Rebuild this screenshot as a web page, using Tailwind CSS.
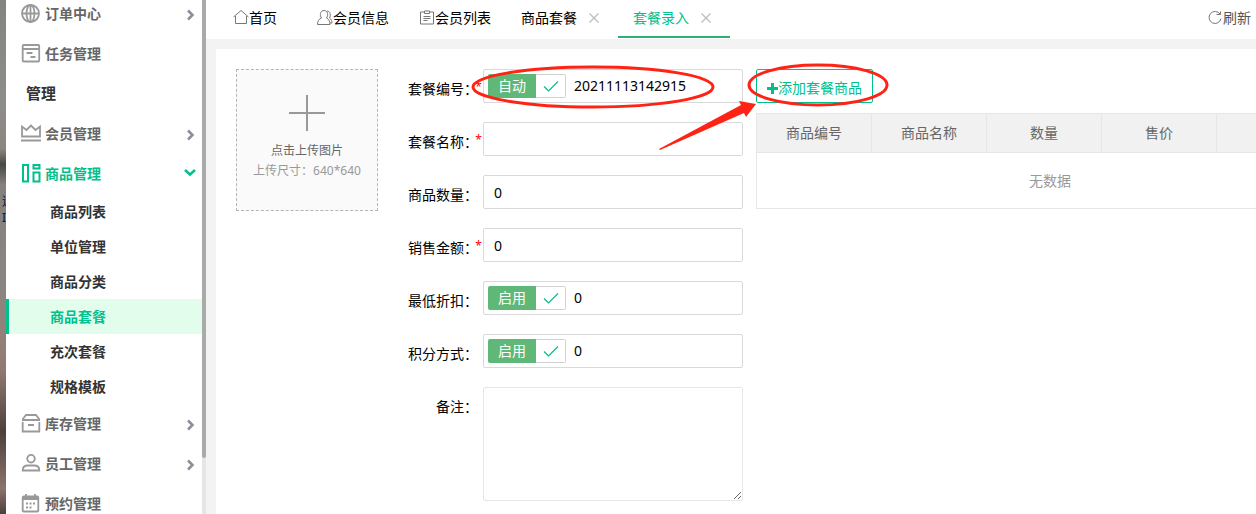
<!DOCTYPE html>
<html lang="zh-CN">
<head>
  <meta charset="UTF-8">
  <meta name="viewport" content="width=device-width, initial-scale=1.0">
  <title>套餐录入</title>
  <script src="https://cdn.jsdelivr.net/npm/@tailwindcss/browser@4"></script>
</head>
<body class="relative flex h-screen overflow-hidden bg-[#f3f3f3] font-['Noto_Sans','Noto_Sans_CJK_SC',sans-serif] text-sm text-black">

  <!-- Desktop behind the window -->
  <div class="w-1.5 shrink-0 overflow-hidden bg-[linear-gradient(#85837d,#8f8d87_20%,#88867f_29%,#4a4844_32%,#85827d_36%,#8a8580_55%,#94807a_65%,#8f7a73_72%,#4d403c_84%,#8c736c_95%,#4a403d)] pt-[194px]">
    <p class="pl-0.5 text-xs leading-4 whitespace-nowrap text-[#10103a]">迷<br>I</p>
  </div>

  <!-- Sidebar -->
  <aside class="flex w-[200px] shrink-0 overflow-hidden bg-white">
    <nav class="-mt-1.5 flex-1 font-bold text-[#666]">
      <a href="#" class="flex h-10 items-center pr-1.5 pl-[15px]">
        <svg class="mr-1 size-5" viewBox="0 0 20 20" fill="none" stroke="#999" stroke-width="1.8"><circle cx="9.500" cy="9.500" r="8.500"/><ellipse cx="9.500" cy="9.500" rx="4" ry="8.500"/><path d="M1 9.500h17M9.500 1v17"/></svg>
        <span class="flex-1">订单中心</span>
        <svg class="mt-0.5 size-3" viewBox="0 0 12 12" fill="none" stroke="#8c8c9a" stroke-width="2.500"><path d="M4 1.500l4.500 4.500L4 10.500"/></svg>
      </a>
      <a href="#" class="flex h-10 items-center pr-1.5 pl-[15px]">
        <svg class="mr-1 size-5" viewBox="0 0 20 20" fill="none" stroke="#999" stroke-width="1.800"><rect x="1.700" y="1" width="16.500" height="16.500" rx="1"/><path d="M2 5h16M5.500 9h6M9.500 13h5"/></svg>
        <span class="flex-1">任务管理</span>
      </a>
      <h2 class="flex h-10 items-center pl-5 text-[15px] text-[#333]">管理</h2>
      <a href="#" class="flex h-10 items-center pr-1.5 pl-[15px]">
        <svg class="mr-1 size-5" viewBox="0 0 20 20" fill="none" stroke="#999" stroke-width="1.800"><path d="M1 12.500V2.500l4.500 3.500L10 1.500 14.500 6 19 2.500v10zM0 16.500h20"/></svg>
        <span class="flex-1">会员管理</span>
        <svg class="mt-0.5 size-3" viewBox="0 0 12 12" fill="none" stroke="#8c8c9a" stroke-width="2.500"><path d="M4 1.500l4.500 4.500L4 10.500"/></svg>
      </a>
      <a href="#" class="flex h-10 items-center pr-1.5 pl-[15px] text-[#00c08b]">
        <svg class="mr-1 size-5" viewBox="0 0 20 20" fill="none" stroke="currentColor" stroke-width="2"><path d="M2 1h5v16.500H2zM12.500 1h6v3.500h-6zM12.500 8.500h6v9h-6z"/></svg>
        <span class="flex-1">商品管理</span>
        <svg class="size-3" viewBox="0 0 12 12" fill="none" stroke="currentColor" stroke-width="2.500"><path d="M1 2l5 4.500L11 2"/></svg>
      </a>
      <ul class="text-[#333]">
        <li><a href="#" class="flex h-[35px] items-center pl-11">商品列表</a></li>
        <li><a href="#" class="flex h-[35px] items-center pl-11">单位管理</a></li>
        <li><a href="#" class="flex h-[35px] items-center pl-11">商品分类</a></li>
        <li><a href="#" class="flex h-[35px] items-center border-l-3 border-[#00c08b] bg-[#e3fdec] pl-[41px] text-[#00c08b]">商品套餐</a></li>
        <li><a href="#" class="flex h-[35px] items-center pl-11">充次套餐</a></li>
        <li><a href="#" class="flex h-[35px] items-center pl-11">规格模板</a></li>
      </ul>
      <a href="#" class="flex h-10 items-center pr-1.5 pl-[15px]">
        <svg class="mr-1 size-5" viewBox="0 0 20 20" fill="none" stroke="#999" stroke-width="1.800"><path d="M1.500 5.500L5 1h10l3.500 4.500M1.700 8v9.500h16.600V8M1 6h18M7 11h6"/></svg>
        <span class="flex-1">库存管理</span>
        <svg class="mt-0.5 size-3" viewBox="0 0 12 12" fill="none" stroke="#8c8c9a" stroke-width="2.500"><path d="M4 1.500l4.500 4.500L4 10.500"/></svg>
      </a>
      <a href="#" class="flex h-10 items-center pr-1.5 pl-[15px]">
        <svg class="mr-1 size-5" viewBox="0 0 20 20" fill="none" stroke="#999" stroke-width="1.800"><circle cx="10" cy="4.700" r="3.800"/><path d="M1.700 16.500c0-3.500 2-5 5-5h6.600c3 0 5 1.500 5 5z"/></svg>
        <span class="flex-1">员工管理</span>
        <svg class="mt-0.5 size-3" viewBox="0 0 12 12" fill="none" stroke="#8c8c9a" stroke-width="2.500"><path d="M4 1.500l4.500 4.500L4 10.500"/></svg>
      </a>
      <a href="#" class="flex h-10 items-center pr-1.5 pl-[15px]">
        <svg class="mr-1 size-5" viewBox="0 0 20 20" fill="none" stroke="#999" stroke-width="1.800"><rect x="1.700" y="2.500" width="15.600" height="15" rx="1"/><path d="M2 4.500h15" stroke-width="3"/><path d="M5 0v4M14 0v4"/><path d="M5 9.500h2M8.500 9.500h2M12 9.500h2M5 13.500h2M8.500 13.500h2" stroke-width="2"/></svg>
        <span class="flex-1">预约管理</span>
      </a>
    </nav>
    <div class="w-1 bg-[#e6e6e6]">
      <div class="h-[458px] rounded-b-xs bg-[#aaa]"></div>
    </div>
  </aside>

  <main class="flex min-w-0 flex-1 flex-col">
    <!-- Tabs -->
    <header class="flex h-[39px] shrink-0 items-start bg-white pl-3">
      <a href="#" class="mr-2.5 flex h-9 items-center px-[15px]">
        <svg class="size-4" viewBox="0 0 16 16" fill="none" stroke="#777"><path d="M.5 7L8 .5 15.500 7M2.500 6v7.500h11V6"/></svg>首页
      </a>
      <a href="#" class="flex h-9 items-center px-[15px]">
        <svg class="size-4" viewBox="0 0 16 16" fill="none" stroke="#777"><path d="M4.500 8C2.500 5.500 3 .5 7 .5S11.500 5.500 9.500 8c2 1 3.500 3 3.500 6.500H.5c0-3.500 1.500-5.500 4-6.500zM10 1c3.500 0 4 4.500 2.500 7 2 1.500 2.500 3 2.500 5h-2"/></svg>会员信息
      </a>
      <a href="#" class="flex h-9 items-center px-[15px]">
        <svg class="size-4" viewBox="0 0 16 16" fill="none" stroke="#777"><path d="M5 2H1.500v12h13V2H11M5.500 1h5v2.500h-5zM4.500 6.500h7M4.500 8.500h7M4.500 10.500h4"/></svg>会员列表
      </a>
      <div class="flex h-9 items-center pr-[19px] pl-[15px]">
        <a href="#">商品套餐</a>
        <button aria-label="关闭" class="ml-3"><svg class="size-2.5" viewBox="0 0 10 10" stroke="#bbb" stroke-width="1.200"><path d="M.5.5l9 9M9.500.5l-9 9"/></svg></button>
      </div>
      <div class="flex h-[38px] items-center border-b-2 border-[#2fb073] pr-[19px] pl-[15px] text-[#00c08b]">
        <a href="#">套餐录入</a>
        <button aria-label="关闭" class="ml-3"><svg class="size-2.5" viewBox="0 0 10 10" stroke="#bbb" stroke-width="1.200"><path d="M.5.5l9 9M9.500.5l-9 9"/></svg></button>
      </div>
      <button class="ml-auto flex h-9 items-center pr-[5px] text-[#555]">
        <svg class="size-4" viewBox="0 0 16 16" fill="none" stroke="#777"><path d="M13 4a6 6 0 1 0 1 4.500M9.500 4.500h4v-3"/></svg>刷新
      </button>
    </header>

    <!-- Form panel -->
    <section class="mt-2.5 ml-2.5 flex flex-1 items-start bg-white pt-5 pl-5">
      <button class="flex size-[142px] shrink-0 flex-col items-center border border-dashed border-[#b5b5b5] bg-[#fafafa] pt-[25px] text-xs leading-5 text-[#666]">
        <svg class="mb-2.5 size-9" viewBox="0 0 36 36" stroke="#999" stroke-width="2"><path d="M18 0v36M0 18h36"/></svg>
        点击上传图片
        <span class="text-[#999]">上传尺寸：640*640</span>
      </button>

      <form class="ml-[30px] flex w-[335px] shrink-0 flex-col gap-[19px]">
        <div class="flex">
          <label for="code" class="w-[70px] pt-2.5 text-right leading-5">套餐编号：</label>
          <span class="-ml-1 w-[9px] pt-2 text-center text-xs leading-5 text-[#f00]">*</span>
          <div class="flex h-[34px] flex-1 items-center rounded-xs border border-[#d9d9d9] px-1">
            <label class="flex h-6 w-[78px] shrink-0">
              <input type="checkbox" checked class="sr-only">
              <span class="flex w-12 items-center justify-center rounded-l-xs bg-[#5fb878] text-white">自动</span>
              <span class="flex flex-1 items-center justify-center rounded-r-xs border border-l-0 border-[#d2d2d2]">
                <svg class="size-4" viewBox="0 0 16 16" fill="none" stroke="#00c08b" stroke-width="1.200"><path d="M1 8.500l4.500 4.500L15 3.500"/></svg>
              </span>
            </label>
            <input id="code" type="text" value="20211113142915" class="w-full min-w-0 pl-2 outline-none">
          </div>
        </div>
        <div class="flex">
          <label for="name" class="w-[70px] pt-2.5 text-right leading-5">套餐名称：</label>
          <span class="-ml-1 w-[9px] pt-2 text-center text-xs leading-5 text-[#f00]">*</span>
          <input id="name" type="text" class="h-[34px] min-w-0 flex-1 rounded-xs border border-[#d9d9d9] px-2.5">
        </div>
        <div class="flex">
          <label for="count" class="mr-[5px] w-[70px] pt-2.5 text-right leading-5">商品数量：</label>
          <input id="count" type="text" value="0" class="h-[34px] min-w-0 flex-1 rounded-xs border border-[#d9d9d9] px-2.5">
        </div>
        <div class="flex">
          <label for="amount" class="w-[70px] pt-2.5 text-right leading-5">销售金额：</label>
          <span class="-ml-1 w-[9px] pt-2 text-center text-xs leading-5 text-[#f00]">*</span>
          <input id="amount" type="text" value="0" class="h-[34px] min-w-0 flex-1 rounded-xs border border-[#d9d9d9] px-2.5">
        </div>
        <div class="flex">
          <label for="discount" class="mr-[5px] w-[70px] pt-2.5 text-right leading-5">最低折扣：</label>
          <div class="flex h-[34px] flex-1 items-center rounded-xs border border-[#d9d9d9] px-1">
            <label class="flex h-6 w-[78px] shrink-0">
              <input type="checkbox" checked class="sr-only">
              <span class="flex w-12 items-center justify-center rounded-l-xs bg-[#5fb878] text-white">启用</span>
              <span class="flex flex-1 items-center justify-center rounded-r-xs border border-l-0 border-[#d2d2d2]">
                <svg class="size-4" viewBox="0 0 16 16" fill="none" stroke="#00c08b" stroke-width="1.200"><path d="M1 8.500l4.500 4.500L15 3.500"/></svg>
              </span>
            </label>
            <input id="discount" type="text" value="0" class="w-full min-w-0 pl-2 outline-none">
          </div>
        </div>
        <div class="flex">
          <label for="points" class="mr-[5px] w-[70px] pt-2.5 text-right leading-5">积分方式：</label>
          <div class="flex h-[34px] flex-1 items-center rounded-xs border border-[#d9d9d9] px-1">
            <label class="flex h-6 w-[78px] shrink-0">
              <input type="checkbox" checked class="sr-only">
              <span class="flex w-12 items-center justify-center rounded-l-xs bg-[#5fb878] text-white">启用</span>
              <span class="flex flex-1 items-center justify-center rounded-r-xs border border-l-0 border-[#d2d2d2]">
                <svg class="size-4" viewBox="0 0 16 16" fill="none" stroke="#00c08b" stroke-width="1.200"><path d="M1 8.500l4.500 4.500L15 3.500"/></svg>
              </span>
            </label>
            <input id="points" type="text" value="0" class="w-full min-w-0 pl-2 outline-none">
          </div>
        </div>
        <div class="flex">
          <label for="remark" class="mr-[5px] w-[70px] pt-2.5 text-right leading-5">备注：</label>
          <textarea id="remark" class="h-[114px] min-w-0 flex-1 rounded-xs border border-[#e6e6e6] px-2.5 py-1.5"></textarea>
        </div>
      </form>

      <!-- Package goods -->
      <div class="ml-[13px] min-w-0 flex-1 overflow-hidden">
        <button class="flex h-[34px] items-center rounded-xs border border-[#00c08b] px-2.5 pt-1 text-[#00c08b]">
          <svg class="size-[11px]" viewBox="0 0 11 11" stroke="currentColor" stroke-width="3"><path d="M5.500 0v11M0 5.500h11"/></svg>添加套餐商品
        </button>
        <table class="mt-2.5 w-[588px] table-fixed border-collapse border border-[#e6e6e6] text-center text-[#666]">
          <thead>
            <tr class="h-[39px] bg-[#f1f1f1]">
              <th class="w-[115px] border border-[#e6e6e6] font-normal">商品编号</th>
              <th class="w-[115px] border border-[#e6e6e6] font-normal">商品名称</th>
              <th class="w-[115px] border border-[#e6e6e6] font-normal">数量</th>
              <th class="w-[115px] border border-[#e6e6e6] font-normal">售价</th>
              <th class="border border-[#e6e6e6]"></th>
            </tr>
          </thead>
          <tbody>
            <tr class="h-14"><td colspan="5" class="text-[#999]">无数据</td></tr>
          </tbody>
        </table>
      </div>
    </section>
  </main>

  <!-- Guide marks over the page -->
  <svg class="pointer-events-none absolute top-0 left-0 h-[514px] w-[1256px]" viewBox="0 0 1256 514" fill="none" stroke="#ff2315" stroke-width="3">
    <ellipse cx="593" cy="87" rx="120" ry="20"/>
    <ellipse cx="818" cy="85" rx="69" ry="20"/>
    <path d="M659 149L741 105l-2-4 17 3-10 13-2-4-84 37z" fill="#ff2315" stroke="none"/>
  </svg>
</body>
</html>
